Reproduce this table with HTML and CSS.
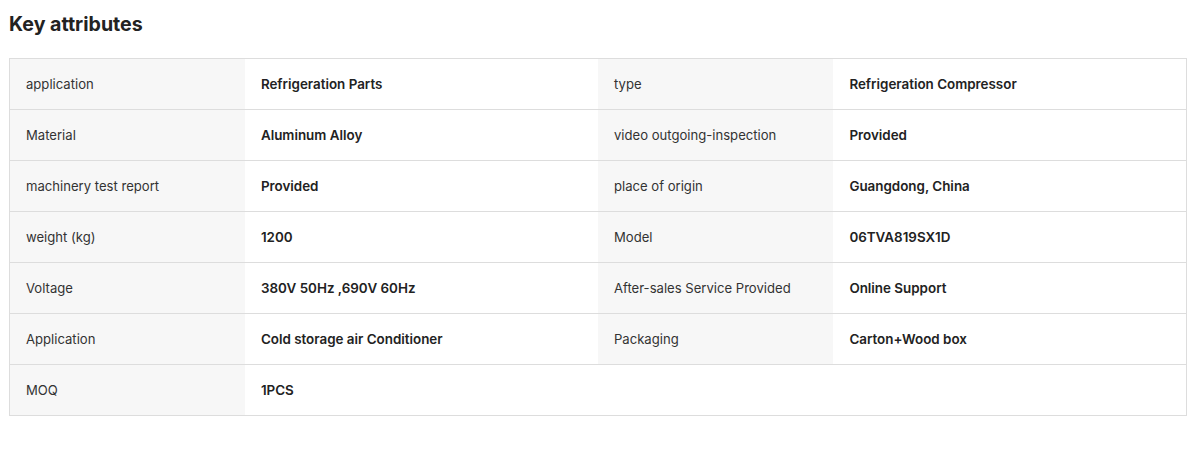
FILE: index.html
```html
<!DOCTYPE html>
<html lang="en">
<head>
	<meta charset="UTF-8">
	<title>Key attributes</title>
	<link rel="stylesheet" href="styles.css">
</head>
<body>
	<div class="contains">
		<h3 class="title">Key attributes</h3>
		<table class="attrs">
			<tr>
				<td class="key">application</td>
				<td class="val">Refrigeration Parts</td>
				<td class="key">type</td>
				<td class="val">Refrigeration Compressor</td>
			</tr>
			<tr>
				<td class="key">Material</td>
				<td class="val">Aluminum Alloy</td>
				<td class="key">video outgoing-inspection</td>
				<td class="val">Provided</td>
			</tr>
			<tr>
				<td class="key">machinery test report</td>
				<td class="val">Provided</td>
				<td class="key">place of origin</td>
				<td class="val">Guangdong, China</td>
			</tr>
			<tr>
				<td class="key">weight (kg)</td>
				<td class="val">1200</td>
				<td class="key">Model</td>
				<td class="val">06TVA819SX1D</td>
			</tr>
			<tr>
				<td class="key">Voltage</td>
				<td class="val">380V 50Hz ,690V 60Hz</td>
				<td class="key">After-sales Service Provided</td>
				<td class="val">Online Support</td>
			</tr>
			<tr>
				<td class="key">Application</td>
				<td class="val">Cold storage air Conditioner</td>
				<td class="key">Packaging</td>
				<td class="val">Carton+Wood box</td>
			</tr>
			<tr>
				<td class="key">MOQ</td>
				<td class="val">1PCS</td>
				<td class="empty"></td>
				<td class="empty"></td>
			</tr>
		</table>
	</div>
</body>
</html>
```

FILE: styles.css
```css
* {
	margin: 0;
	padding: 0;
	box-sizing: border-box;
	font-family: Inter, 'Noto Sans', sans-serif;
}
body {
	background: #fff;
	color: #222;
}
.contains {
	padding: 10px 6px 0 9px;
}
.title {
	font-size: 19.6px;
	line-height: 28px;
	font-weight: 700;
	color: #222;
	margin-bottom: 20px;
}
.attrs {
	width: 100%;
	border-collapse: collapse;
	table-layout: fixed;
	border: 1px solid #ddd;
}
.attrs td {
	height: 51px;
	padding: 0 16px;
	border-top: 1px solid #ddd;
	vertical-align: middle;
}
.key {
	width: 20%;
	font-size: 13.1px;
	background: #f7f7f7;
	color: #333;
}
.val {
	width: 30%;
	font-size: 13.4px;
	font-weight: 600;
	color: #222;
}
.empty {
	background: #fff;
}
```
